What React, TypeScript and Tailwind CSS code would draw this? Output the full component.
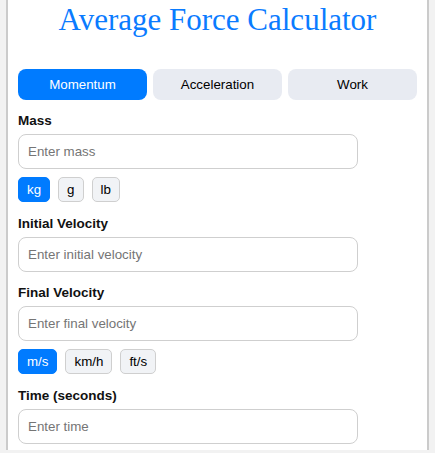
import React from "react";

function Field({ label, placeholder }: { label: string; placeholder: string }) {
  return (
    <div className="flex flex-col">
      <label className="text-[13.5px] font-bold leading-[17px] text-[#111] mb-[5px]">{label}</label>
      <input
        className="w-[340px] h-[35px] rounded-[8px] border border-[#cfcfcf] px-[9px] text-[13.333px] outline-none placeholder:text-[#757575]"
        placeholder={placeholder}
      />
    </div>
  );
}

function Units({ items }: { items: string[] }) {
  return (
    <div className="flex gap-2 mt-[8px]">
      {items.map((u, i) => (
        <button
          key={u}
          className={
            i === 0
              ? "h-[25px] px-2 rounded-[5px] border border-[#007bff] bg-[#007bff] text-white text-[13.333px] leading-none"
              : "h-[25px] px-2 rounded-[5px] border border-[#cfcfcf] bg-[#f1f3f6] text-black text-[13.333px] leading-none"
          }
        >
          {u}
        </button>
      ))}
    </div>
  );
}

export default function App() {
  return (
    <div className="h-[453px] overflow-hidden bg-[#f2f2f2] px-[6px] font-['Liberation_Sans',Arial,sans-serif]">
      <div className="h-[450px] border-x-2 border-[#cbcbcb] bg-white px-[10px] pt-[2px]">
        <h1 className="text-center text-[31px] leading-[36px] text-[#0a7bff] font-['Liberation_Serif','Times_New_Roman',serif]">
          Average Force Calculator
        </h1>
        <div className="mt-[31px] grid grid-cols-3 gap-[6px]">
          <button className="h-[31px] rounded-[8px] bg-[#007bff] text-white text-[13.333px]">Momentum</button>
          <button className="h-[31px] rounded-[8px] bg-[#e8ebf2] text-black text-[13.333px]">Acceleration</button>
          <button className="h-[31px] rounded-[8px] bg-[#e8ebf2] text-black text-[13.333px]">Work</button>
        </div>
        <div className="mt-[12px]">
          <Field label="Mass" placeholder="Enter mass" />
          <Units items={["kg", "g", "lb"]} />
        </div>
        <div className="mt-[13px]">
          <Field label="Initial Velocity" placeholder="Enter initial velocity" />
        </div>
        <div className="mt-[12px]">
          <Field label="Final Velocity" placeholder="Enter final velocity" />
          <Units items={["m/s", "km/h", "ft/s"]} />
        </div>
        <div className="mt-[13px]">
          <Field label="Time (seconds)" placeholder="Enter time" />
        </div>
      </div>
    </div>
  );
}
